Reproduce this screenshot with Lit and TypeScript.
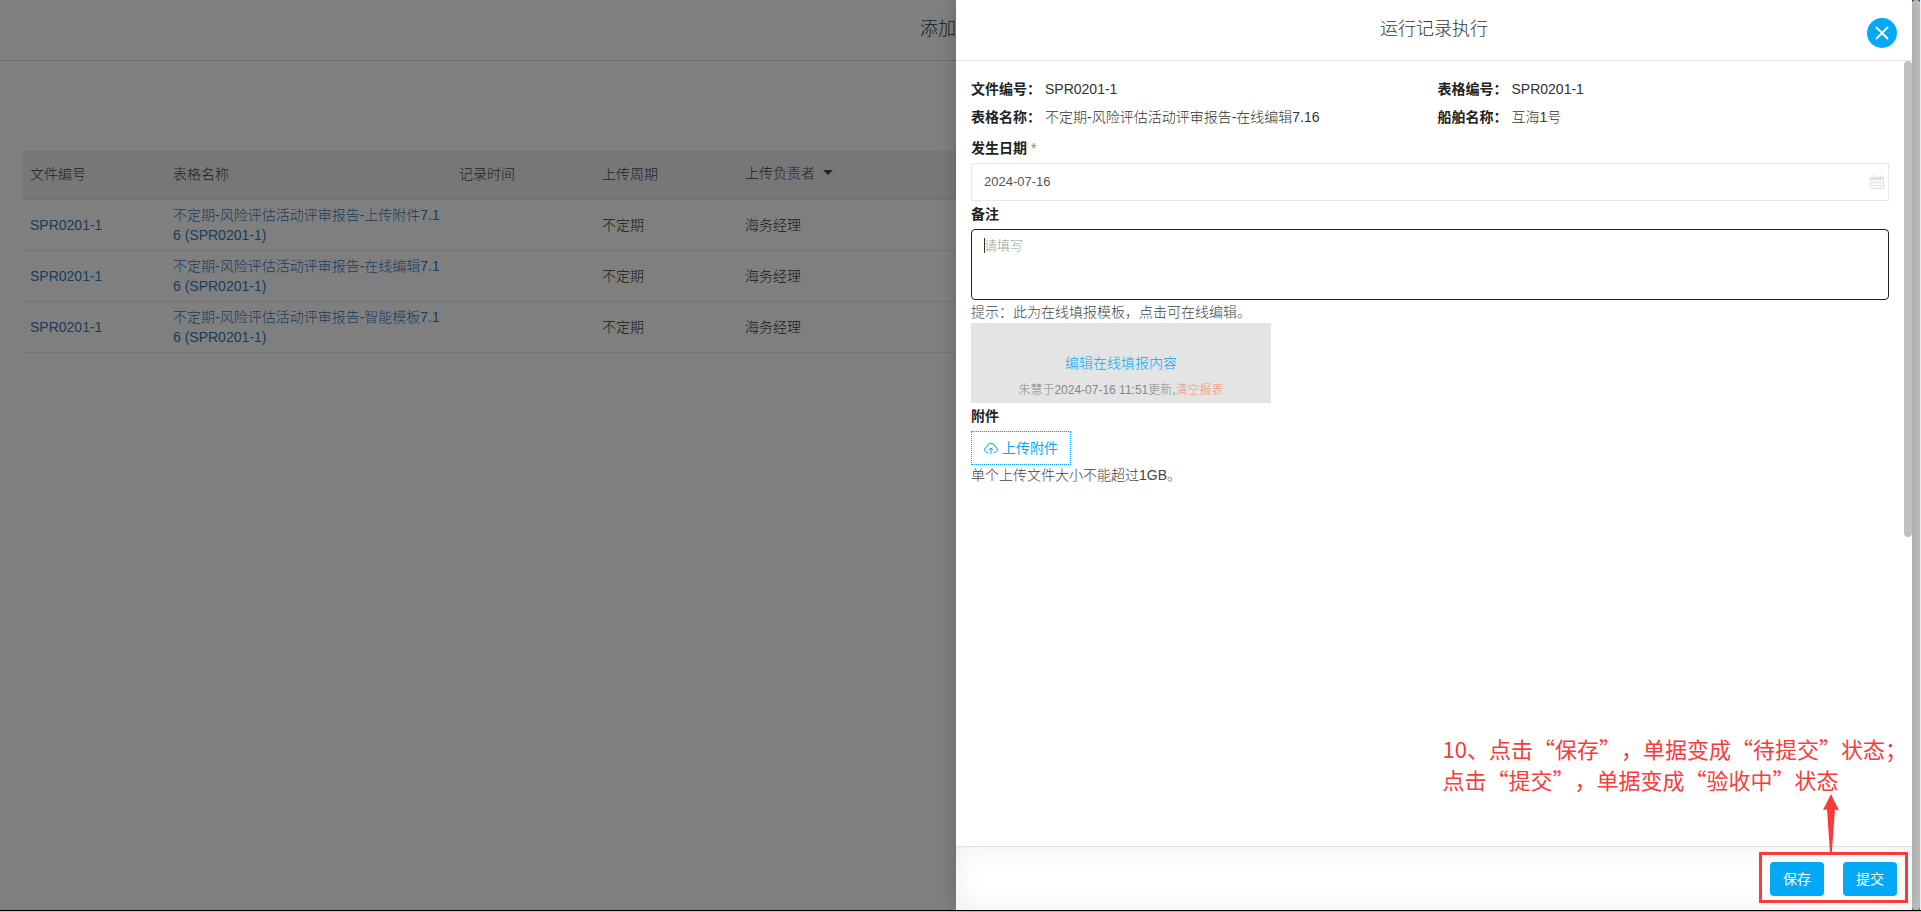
import { LitElement, html, css } from "lit";
import { customElement, property, state } from "lit/decorators.js";

interface RecordRow {
  code: string;
  name: string;
  recordedAt: string;
  cycle: string;
  owner: string;
}

@customElement("record-table")
class RecordTable extends LitElement {
  @property({ attribute: false }) rows: RecordRow[] = [];

  static styles = css`
    :host {
      display: block;
    }
    .table {
      width: 100%;
      table-layout: fixed;
      border-collapse: separate;
      border-spacing: 0;
      line-height: 20px;
    }
    .narrow {
      width: 143px;
    }
    .wide {
      width: 286px;
    }
    .head {
      height: 49px;
      box-sizing: border-box;
      padding: 0 7px 2px;
      text-align: left;
      font-weight: inherit;
      color: #444;
      background: #eee;
      border-bottom: 2px solid #e6e6e6;
    }
    .cell {
      padding: 5px 7px;
      word-break: break-all;
      border-bottom: 1px solid #e6e6e6;
    }
    .link {
      color: #337ab7;
      text-decoration: none;
    }
    .sort {
      display: flex;
      align-items: center;
      gap: 8px;
      padding: 0 0 2px;
      border: 0;
      background: none;
      font: inherit;
      color: inherit;
    }
    .caret {
      border: 5px solid transparent;
      border-top-color: currentColor;
      border-bottom: 0;
    }
  `;

  render() {
    return html`
      <table class="table">
        <colgroup>
          <col class="narrow" />
          <col class="wide" />
          <col class="narrow" />
          <col class="narrow" />
          <col />
        </colgroup>
        <thead>
          <tr>
            <th class="head">文件编号</th>
            <th class="head">表格名称</th>
            <th class="head">记录时间</th>
            <th class="head">上传周期</th>
            <th class="head">
              <button class="sort" type="button">上传负责者<span class="caret"></span></button>
            </th>
          </tr>
        </thead>
        <tbody>
          ${this.rows.map(
            (r) => html`<tr>
              <td class="cell"><a class="link" href="#">${r.code}</a></td>
              <td class="cell"><a class="link" href="#">${`${r.name} (${r.code})`}</a></td>
              <td class="cell">${r.recordedAt}</td>
              <td class="cell">${r.cycle}</td>
              <td class="cell">${r.owner}</td>
            </tr>`
          )}
        </tbody>
      </table>
    `;
  }
}

@customElement("record-drawer")
class RecordDrawer extends LitElement {
  @state() private date = "2024-07-16";

  static styles = css`
    :host {
      display: flex;
      flex-direction: column;
      background: #fff;
      color: #222;
      line-height: 20px;
    }
    .header {
      display: grid;
      grid-template-columns: 1fr auto 1fr;
      height: 60px;
      flex: none;
      border-bottom: 1px solid #e3e3e3;
    }
    .title {
      grid-column: 2;
      margin: 0;
      padding-top: 15px;
      font-size: 18px;
      line-height: 28px;
      font-weight: inherit;
      color: #333;
    }
    .close {
      justify-self: end;
      display: grid;
      place-items: center;
      width: 30px;
      height: 30px;
      margin: 18px 15px 0 0;
      padding: 0;
      border: 0;
      border-radius: 50%;
      background: #03a9f4;
    }
    .body {
      flex: 1;
      display: flex;
      min-height: 0;
    }
    .form {
      flex: 1;
      min-width: 0;
      padding: 14px 15px 0;
    }
    .thumb {
      width: 8px;
      height: 60.7%;
      border-radius: 4px;
      background: #c1c1c1;
    }
    .facts {
      display: grid;
      grid-template-columns: 1fr 1fr;
      column-gap: 15px;
      margin: 0;
      line-height: 28px;
    }
    .fact {
      display: flex;
      gap: 4px;
    }
    .fact dt,
    .label {
      font-weight: bold;
    }
    .fact dd {
      margin: 0;
      color: #333;
    }
    .label {
      display: block;
      line-height: 26px;
      padding: 4px 0 2px;
    }
    .label.tight {
      padding-top: 0;
    }
    .star {
      font-weight: normal;
      color: #f4623a;
    }
    .control {
      position: relative;
    }
    .input,
    .area {
      display: block;
      box-sizing: border-box;
      width: 100%;
      margin: 0;
      font: inherit;
      font-size: 13px;
      color: #555;
      background: #fff;
      outline: none;
    }
    .input {
      height: 38px;
      padding: 0 12px 2px;
      border: 1px solid #e8e8e8;
    }
    .area {
      height: 71px;
      padding: 6px 12px;
      line-height: 20px;
      border: 1px solid #222;
      border-radius: 4px;
      resize: none;
    }
    .area::placeholder {
      color: #999;
      opacity: 1;
    }
    .cursor {
      position: absolute;
      left: 13px;
      top: 9px;
      width: 1px;
      height: 15px;
      background: #333;
    }
    .calendar {
      position: absolute;
      right: 5px;
      top: 12px;
    }
    .hint {
      margin: 0;
      color: #444;
    }
    .hint.first {
      padding: 2px 0 1px;
    }
    .template {
      box-sizing: border-box;
      width: 300px;
      height: 80px;
      padding-top: 30px;
      text-align: center;
      background: #e4e4e4;
    }
    .edit {
      display: block;
      color: #03a9f4;
      text-decoration: none;
    }
    .meta {
      margin: 0;
      padding-top: 7px;
      font-size: 12px;
      color: #888;
    }
    .clear {
      color: #ff8a70;
      text-decoration: none;
    }
    .upload {
      display: flex;
      align-items: center;
      justify-content: center;
      gap: 4px;
      width: 100px;
      height: 34px;
      padding: 0 0 1px;
      border: 1px dotted #03a9f4;
      background: #fff;
      font: inherit;
      font-weight: 400;
      color: #03a9f4;
    }
    .footer {
      display: flex;
      flex: none;
      justify-content: flex-end;
      gap: 19px;
      padding: 15px 15px 14px;
      border-top: 1px solid #e0e0e0;
      box-shadow: inset 0 0 28px rgba(0, 0, 0, 0.07);
    }
    .action {
      width: 54px;
      height: 34px;
      padding: 0;
      border: 0;
      border-radius: 4px;
      background: #03a9f4;
      font: inherit;
      font-weight: 400;
      color: #fff;
    }
  `;

  private fact(label: string, value: string) {
    return html`<div class="fact"><dt>${label}：</dt><dd>${value}</dd></div>`;
  }

  render() {
    return html`
      <header class="header">
        <h2 class="title">运行记录执行</h2>
        <button class="close" type="button" aria-label="关闭">
          <svg width="14" height="14" viewBox="0 0 14 14" fill="none" stroke="#fff" stroke-width="1.8" stroke-linecap="round">
            <path d="M1.5 1.5 12.5 12.5M12.5 1.5 1.5 12.5" />
          </svg>
        </button>
      </header>
      <div class="body">
        <form class="form">
          <dl class="facts">
            ${this.fact("文件编号", "SPR0201-1")} ${this.fact("表格编号", "SPR0201-1")}
            ${this.fact("表格名称", "不定期-风险评估活动评审报告-在线编辑7.16")} ${this.fact("船舶名称", "互海1号")}
          </dl>
          <label class="label" for="date">发生日期 <span class="star">*</span></label>
          <div class="control">
            <input
              class="input"
              id="date"
              type="text"
              .value=${this.date}
              @change=${(e: Event) => (this.date = (e.target as HTMLInputElement).value)}
            />
            <svg class="calendar" width="14" height="14" viewBox="0 0 14 14" fill="#dfe2e6">
              <path
                fill-rule="evenodd"
                d="M1 2H2.5V1Q2.5 0 3.5 0T4.500 1V2H9.500V1Q9.500 0 10.500 0T11.500 1V2H13Q14 2 14 3V13Q14 14 13 14H1Q0 14 0 13V3Q0 2 1 2ZM1 5V7H3.500V5ZM4.200 5V7H6.700V5ZM7.400 5V7H9.800V5ZM10.500 5V7H13V5ZM1 7.700V10H3.500V7.700ZM4.200 7.700V10H6.700V7.700ZM7.400 7.700V10H9.800V7.700ZM10.500 7.700V10H13V7.700ZM1 10.700V13H3.500V10.700ZM4.200 10.700V13H6.700V10.700ZM7.400 10.700V13H9.800V10.700ZM10.500 10.700V13H13V10.700Z"
              />
            </svg>
          </div>
          <label class="label tight" for="remark">备注</label>
          <div class="control">
            <textarea class="area" id="remark" placeholder="请填写"></textarea>
            <span class="cursor"></span>
          </div>
          <p class="hint first">提示：此为在线填报模板，点击可在线编辑。</p>
          <div class="template">
            <a class="edit" href="#">编辑在线填报内容</a>
            <p class="meta">朱慧于2024-07-16 11:51更新,<a class="clear" href="#">清空报表</a></p>
          </div>
          <label class="label tight" for="upload">附件</label>
          <button class="upload" id="upload" type="button">
            <svg width="14" height="14" viewBox="0 0 14 14" fill="none" stroke="currentColor" stroke-width="1">
              <path d="M4.300 11.500H3.300A2.800 2.800 0 0 1 2.700 6A4.350 4.350 0 0 1 11.300 6A2.800 2.800 0 0 1 10.700 11.500H9.700M7 13V7.200M4.900 9.200 7 7 9.100 9.200" />
            </svg>
            上传附件
          </button>
          <p class="hint">单个上传文件大小不能超过1GB。</p>
        </form>
        <div class="thumb"></div>
      </div>
      <footer class="footer">
        <button class="action" type="button">保存</button>
        <button class="action" type="button">提交</button>
      </footer>
    `;
  }
}

@customElement("app-root")
class AppRoot extends LitElement {
  private rows: RecordRow[] = ["上传附件", "在线编辑", "智能模板"].map((kind) => ({
    code: "SPR0201-1",
    name: `不定期-风险评估活动评审报告-${kind}7.16`,
    recordedAt: "",
    cycle: "不定期",
    owner: "海务经理",
  }));

  static styles = css`
    :host {
      display: flex;
      flex-direction: column;
      height: 100vh;
      overflow: hidden;
      font-family: "Liberation Sans", "Noto Sans CJK SC", sans-serif;
      font-size: 14px;
      font-weight: 300;
      color: #333;
      text-spacing-trim: space-all;
    }
    .window {
      flex: 1;
      min-height: 0;
      display: flex;
      border-bottom: 1px solid #000;
    }
    .stage {
      position: relative;
      flex: 1;
      min-width: 0;
    }
    .page-header {
      height: 60px;
      border-bottom: 1px solid #ddd;
    }
    .page-title {
      width: 50%;
      margin: 0;
      padding-top: 15px;
      text-align: right;
      font-size: 18px;
      line-height: 28px;
      font-weight: inherit;
    }
    .list {
      padding: 90px 23px 0;
    }
    .shade {
      position: absolute;
      inset: 0;
      background: rgba(0, 0, 0, 0.5);
    }
    .drawer {
      position: absolute;
      top: 0;
      right: 0;
      bottom: 0;
      width: 50%;
      box-shadow: 0 0 16px rgba(0, 0, 0, 0.2);
    }
    .gutter {
      width: 8px;
      background: linear-gradient(#1f5b80 0 2px, #fff 2px calc(100% - 4px), #777 calc(100% - 4px));
      border-right: 1px solid #f1f1f1;
    }
    .thumb {
      height: 100%;
      border-radius: 4px;
      background: #c1c1c1;
    }
    .edge {
      height: 1px;
      background: #b4c6c6;
    }
    .note {
      position: absolute;
      right: 5px;
      bottom: 115px;
      margin: 0;
      font-family: "Noto Sans CJK SC", sans-serif;
      font-size: 22px;
      line-height: 31px;
      font-weight: 400;
      white-space: nowrap;
      color: #fb3a3a;
    }
    .arrow {
      position: absolute;
      right: 73px;
      bottom: 57px;
    }
    .frame {
      position: absolute;
      right: 4px;
      bottom: 7px;
      box-sizing: border-box;
      width: 149px;
      height: 51px;
      border: 3px solid #fb3a3a;
      pointer-events: none;
    }
  `;

  render() {
    return html`
      <div class="window" lang="zh-CN">
        <div class="stage">
          <header class="page-header"><h1 class="page-title">添加</h1></header>
          <main class="list"><record-table .rows=${this.rows}></record-table></main>
          <div class="shade"></div>
          <record-drawer class="drawer"></record-drawer>
          <p class="note">10、点击“保存”，单据变成“待提交”状态；<br />点击“提交”，单据变成“验收中”状态</p>
          <svg class="arrow" width="16" height="59" viewBox="0 0 16 59" fill="#fb3a3a">
            <path d="M8 0 16 16.500 12 15.500 8.800 59H7L4 15.500 0 16Z" />
          </svg>
          <div class="frame"></div>
        </div>
        <div class="gutter"><div class="thumb"></div></div>
      </div>
      <div class="edge"></div>
    `;
  }
}
